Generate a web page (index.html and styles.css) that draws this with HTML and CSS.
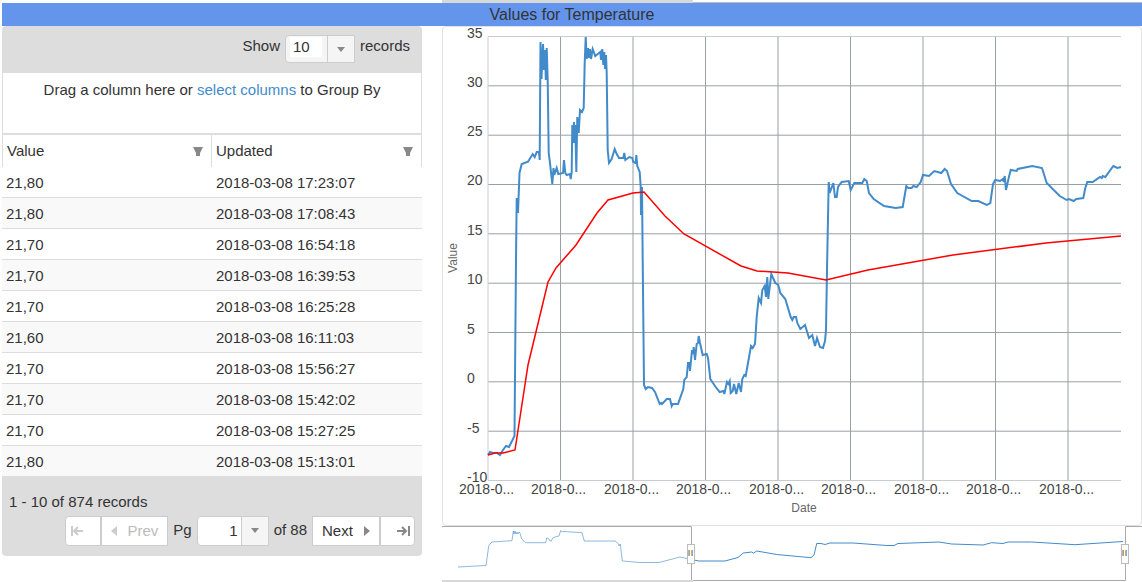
FILE: index.html
```html
<!DOCTYPE html>
<html lang="en">
<head>
  <meta charset="UTF-8" />
  <meta name="viewport" content="width=device-width, initial-scale=1" />
  <title>Values for Temperature</title>
  <link rel="stylesheet" href="styles.css">
</head>
<body>
  <div class="prev-scroll"><div class="prev-thumb"></div></div>
  <h1 class="title">Values for Temperature</h1>

  <div class="content">
    <section class="grid">
      <div class="grid-toolbar">
        <label for="page-size">Show</label>
        <span class="combo combo-size">
          <select id="page-size">
            <option>5</option>
            <option selected>10</option>
            <option>20</option>
          </select>
        </span>
        <span>records</span>
      </div>
      <div class="group-by">Drag a column here or <a href="#">select columns</a> to Group By</div>

      <table>
        <thead>
          <tr>
            <th>Value <svg class="filter" viewBox="0 0 10 10"><path d="M0 0h10L7 6v3H3V6z" /></svg></th>
            <th>Updated <svg class="filter" viewBox="0 0 10 10"><path d="M0 0h10L7 6v3H3V6z" /></svg></th>
          </tr>
        </thead>
        <tbody>
          <tr><td>21,80</td><td>2018-03-08 17:23:07</td></tr>
          <tr><td>21,80</td><td>2018-03-08 17:08:43</td></tr>
          <tr><td>21,70</td><td>2018-03-08 16:54:18</td></tr>
          <tr><td>21,70</td><td>2018-03-08 16:39:53</td></tr>
          <tr><td>21,70</td><td>2018-03-08 16:25:28</td></tr>
          <tr><td>21,60</td><td>2018-03-08 16:11:03</td></tr>
          <tr><td>21,70</td><td>2018-03-08 15:56:27</td></tr>
          <tr><td>21,70</td><td>2018-03-08 15:42:02</td></tr>
          <tr><td>21,70</td><td>2018-03-08 15:27:25</td></tr>
          <tr><td>21,80</td><td>2018-03-08 15:13:01</td></tr>
        </tbody>
      </table>

      <div class="grid-footer">
        <div class="count">1 - 10 of 874 records</div>
        <div class="pager">
          <button class="first" aria-label="First page" disabled>
            <svg width="12" height="10" viewBox="0 0 12 10"><path class="line" d="M1 0v10M12 5H4M7 1L3 5l4 4" /></svg>
          </button>
          <button class="prev" disabled>
            <svg width="6" height="10" viewBox="0 0 6 10"><path d="M6 0v10L0 5z" /></svg>
            Prev
          </button>
          <label for="page">Pg</label>
          <span class="combo combo-page">
            <select id="page">
              <option>1</option>
              <option>2</option>
              <option>3</option>
            </select>
          </span>
          <span class="of">of 88</span>
          <button class="next">
            Next
            <svg width="6" height="10" viewBox="0 0 6 10"><path d="M0 0v10l6-5z" /></svg>
          </button>
          <button class="last" aria-label="Last page">
            <svg width="13" height="10" viewBox="0 0 13 10"><path class="line" d="M12 0v10M0 5h9M5 1l4 4-4 4" /></svg>
          </button>
        </div>
      </div>
    </section>

    <section class="charts">
      <div class="chart">
        <svg viewBox="443 27 698 498">
          <g class="grid-lines">
            <path d="M488 85.800H1121M488 135.200H1121M488 184.500H1121M488 233.800H1121M488 283.200H1121M488 332.500H1121M488 381.800H1121M488 431.200H1121" />
            <path d="M560.500 36V481M633 36V481M705.500 36V481M778 36V481M850.500 36V481M923 36V481M995.500 36V481M1068 36V481" />
            <path class="edge" d="M1121 36.500H488V480.500H1121" />
          </g>

          <polyline class="series" points="488,455 490,452 493,453 497,453 500,455 503,450 506,446 509,447 512,441 514.500,436
            516,260 516.700,198 518,213 519.500,173 521.700,164 528,161.700 532.700,154 534.700,157 536.700,152 539,152 539.700,160
            540.500,42 541.500,79 543,44 544,70 545,50 545.800,80 546.700,48 547.700,80 548.700,153 550,163 552.300,184 553.500,168 554.300,175
            556.700,168 558.300,174 563,173 564,160 565.300,173 566.700,175 570,174 570.700,179 571.700,172 572.300,125 573,143 574,122 574.700,143
            575.300,125 576.300,172 577.300,117 578.700,133 580,110 582,112 583.700,108 584.700,63 585.700,37 586.700,59 588,48 589,58 590,49 591,59
            592.700,49 595.300,56 599,53 600.300,52 601,60 602.300,49 603.300,65 604.300,52 605,69 606,55 606.700,73 607.700,150 609,163 611.700,159
            614.700,149 616.700,154 619,158 623.300,158 624.300,153 625.300,160 629.300,157 632.300,158 633.300,162 635.700,163 636.300,155 637.300,166
            639.700,172 640.700,187 641,215 642,187 642.700,260 644,385 645.700,389 648,387 652,388 655,392 659.700,404 661,403 662,404 666.700,399
            670,399 671.700,406 672.700,404 678,404 683.300,389 684.300,380 686.700,377 688,363 689.300,363 690,371 692,350 693,354 693.700,347 695,360
            696.700,344 698,343 698.700,336 700,343 702.700,355 706.700,354 708,358 710.300,379 715,386 719.700,392 723.700,391 724.300,394 727,382
            728.300,384 729.700,381 730.700,393 732.700,391 734,384 736.300,394 738.700,383 741,392 742.300,379 744.300,375 745.700,376 751,346 752.700,348
            755,344 756.700,317 758.700,298 761,303 762.300,290 764.700,286 766,297 767.300,277 768.300,299 771.300,274 775.300,283 778.300,285
            780.300,293 785.300,299 790.700,317 792.300,320 793.700,317 796,317 797.300,323 800.300,329 805,325 809,338 812.300,335 815,346 817,338
            820,347 823,348 825,341 826,330 827,270 828.700,182 829.700,193 833.300,183 835,197 836.700,197 838,187 841.700,182 848.700,181
            850.700,190 854.300,183 862.300,183 864.300,179 866.700,181 869,193 873.700,199 884,206 895.700,208 902.700,207 906.300,186 908.300,188
            911.700,188 913.300,186 916.700,187 920.700,182 923,175 929,176 934.300,171 941.300,173 944.700,169 947,171 951,184 957.300,193 971.700,201
            978.300,201 986.700,205 990.300,203 993,184 995.300,180 1000,181 1003,179 1003.700,182 1004.700,176 1006,190 1008.700,178 1010.700,170
            1016.700,171 1017.700,169 1032.300,166 1042,168 1046.700,183 1059.700,196 1066.700,200 1069,199 1073.700,201 1076.300,199 1083.300,198
            1085.300,188 1087.300,182 1092.700,182 1100,177 1101.700,178 1102.700,176 1105.300,177 1113.300,166 1117.300,168 1121,167" />
          <polyline class="average" points="488,455 495,453 503,453 515,450 528,365 548,282 556,268 576,245 597,213 608,200 633,193 644,192
            665,216 684,234 741,266 757,271 788,273 826,280 868,270 953,255 1046,243 1121,236" />

          <g class="tick">
            <text x="467" y="38">35</text>
            <text x="467" y="87">30</text>
            <text x="467" y="136">25</text>
            <text x="467" y="185">20</text>
            <text x="467" y="235">15</text>
            <text x="467" y="284">10</text>
            <text x="467" y="334">5</text>
            <text x="467" y="383">0</text>
            <text x="467" y="433">-5</text>
            <text x="467" y="482">-10</text>
          </g>
          <g class="tick">
            <text x="459" y="494">2018-0...</text>
            <text x="531" y="494">2018-0...</text>
            <text x="604" y="494">2018-0...</text>
            <text x="676" y="494">2018-0...</text>
            <text x="749" y="494">2018-0...</text>
            <text x="821" y="494">2018-0...</text>
            <text x="894" y="494">2018-0...</text>
            <text x="966" y="494">2018-0...</text>
            <text x="1039" y="494">2018-0...</text>
          </g>
          <text class="axis-title" x="804" y="512">Date</text>
          <text class="axis-title" transform="translate(457 258) rotate(-90)">Value</text>
        </svg>
      </div>

      <svg class="navigator" viewBox="442 526 700 56">
        <polyline class="series faded" points="458,567 486,565.500 488.700,546 490,544 492,542 512,540.700 513.300,531 514,534 515,531 516,534 517,532 518,534 519,532
          520,533 521.700,539 525.700,542.700 545.700,542.700 546.700,538 549,539 550,541 551.300,541 552.700,538 555,537 559,536 560.700,530.500 562,532 564,531.500
          582,532.700 584.300,541 615,541 618.700,544 619,546 620.300,544 622.300,561 640,562.500 659,562.500 680,557 691,559.500" />
        <polyline class="series thin" points="691,559.500 699,561 725,561 738,557.500 743.300,553 751.700,552 753.500,553 756.700,551 776.700,554.500 811,557.700 814,555
          816.700,543.500 821,543.500 825,544.500 830,543 853,543 886.700,545.500 894,545.500 898,543.500 939,542 951.700,544 983,545 991.700,542.700 1003,543.500
          1008,542 1031.700,542 1075,544.700 1123,541.500" />
        <path class="range" d="M442 526.500H691.500V580.500H1125.500V526.500H1142" />
        <path class="scroll" d="M442 580H693V582H442z" />
        <g class="handle">
          <rect x="687.500" y="544.500" width="7" height="19" />
          <path class="grip-a" d="M688.500 550v6M691.500 550v6" />
          <path class="grip-b" d="M689.500 550v6M692.500 550v6" />
        </g>
        <g class="handle">
          <rect x="1121.500" y="544.500" width="7" height="19" />
          <path class="grip-a" d="M1122.500 550v6M1125.500 550v6" />
          <path class="grip-b" d="M1123.500 550v6M1126.500 550v6" />
        </g>
      </svg>
    </section>
  </div>
</body>
</html>
```
FILE: styles.css
```css
* { box-sizing: border-box; }
body {
  margin: 0 0 0 2px;
  font-family: "Liberation Sans", Arial, sans-serif;
  font-size: 15px;
  line-height: 20px;
  color: #333;
  background: #fff;
}
svg { display: block; }

/* bottom edge of the scrollbar above the title */
.prev-scroll {
  height: 3px;
  padding-left: 440px;
  background: linear-gradient(#bbb, #bbb) 440px 2px / 100% 1px no-repeat;
}
.prev-thumb {
  width: 251px;
  height: 3px;
  background: #d8d8d8;
}
.title {
  margin: 0;
  font-size: 16px;
  font-weight: normal;
  line-height: 23px;
  text-align: center;
  background: #6495ed;
}
.content {
  display: grid;
  grid-template-columns: 3fr 5fr;
  gap: 20px;
  align-items: start;
}

/* data grid */
.grid-toolbar {
  display: flex;
  justify-content: flex-end;
  align-items: flex-start;
  gap: 5px;
  height: 47px;
  padding: 10px 12px 0 0;
  background: #ddd;
  border-radius: 4px 4px 0 0;
}
.group-by {
  height: 62px;
  padding-top: 7px;
  text-align: center;
  border: 1px solid #ddd;
  border-width: 0 1px 2px;
}
.group-by a {
  color: #428bca;
  text-decoration: none;
}
table {
  width: 100%;
  table-layout: fixed;
  border-spacing: 0;
}
th {
  height: 32px;
  padding: 0 8px 0 4px;
  font-weight: normal;
  text-align: left;
  border-right: 1px solid #ddd;
}
th:first-child { border-left: 1px solid #ddd; }
.filter {
  float: right;
  width: 10px;
  height: 10px;
  margin-top: 6px;
  fill: #888;
}
td {
  height: 31px;
  padding: 2px 4px 0;
  border-bottom: 1px solid #ddd;
}
tbody tr:nth-child(even) { background: #f9f9f9; }
.grid-footer {
  padding: 15px 7px 10px;
  background: #ddd;
  border-radius: 0 0 4px 4px;
}
.count { margin-bottom: 4px; }
.pager {
  display: flex;
  justify-content: flex-end;
}
.pager label { margin: 4px 5px 0; }
.pager .of { margin: 4px 5px 0; }
button {
  display: flex;
  align-items: center;
  justify-content: space-between;
  height: 30px;
  padding: 0 9px;
  font: inherit;
  color: #333;
  background: #fff;
  border: 1px solid #ccc;
  fill: #888;
}
button .line {
  fill: none;
  stroke: #888;
  stroke-width: 2;
}
button:disabled { color: #bbb; fill: #ccc; }
button:disabled .line { stroke: #ccc; }
.first {
  width: 36px;
  padding: 0 5px;
  border-radius: 4px 0 0 4px;
}
.prev { width: 67px; }
.next { width: 68px; }
.last {
  width: 35px;
  padding: 0 4px;
  justify-content: flex-end;
  border-radius: 0 4px 4px 0;
}

/* drop-downs */
.combo { position: relative; }
.combo::after {
  content: "";
  position: absolute;
  top: 12px;
  right: 10px;
  border: 4px solid transparent;
  border-top: 5px solid #888;
  border-bottom: 0;
  pointer-events: none;
}
.combo select {
  display: block;
  appearance: none;
  font: inherit;
  color: #333;
  border: 1px solid #ccc;
  border-radius: 4px 0 0 4px;
}
.combo-size { margin-top: -1px; }
.combo-size select {
  width: 70px;
  height: 28px;
  padding: 0 8px 4px 7px;
  background:
    linear-gradient(#ccc, #ccc) 41px 0 / 1px 100% no-repeat,
    linear-gradient(#fff, #fff) 4px 1px / 32px 20px no-repeat,
    #f5f5f5;
}
.combo-page select {
  width: 72px;
  height: 30px;
  padding: 0 30px 0 8px;
  text-align: right;
  background:
    linear-gradient(#ccc, #ccc) 43px 0 / 1px 100% no-repeat,
    linear-gradient(#fff, #fff) 0 0 / 43px 100% no-repeat,
    #f5f5f5;
}

/* charts */
.charts { min-width: 0; }
.chart {
  border: 1px solid #e2e2e2;
  border-radius: 4px;
}
.chart svg { overflow: visible; }
.grid-lines {
  fill: none;
  stroke: #9a9fa4;
}
.grid-lines .edge { stroke: #c8ccd0; }
.series {
  fill: none;
  stroke: #428bca;
  stroke-width: 2;
}
.average {
  fill: none;
  stroke: #f00;
  stroke-width: 1.5;
}
.series.thin { stroke-width: 1; }
.series.faded { stroke-width: 1; opacity: 0.6; }
.tick {
  font-size: 14px;
  fill: #444;
}
.axis-title {
  font-size: 12px;
  fill: #666;
  text-anchor: middle;
}
.range {
  fill: none;
  stroke: #aaa;
}
.scroll { fill: #d8d8d8; }
.handle rect { fill: #fff; stroke: #bbb; }
.grip-a { stroke: #e8a860; }
.grip-b { stroke: #6cb0e0; }
```
